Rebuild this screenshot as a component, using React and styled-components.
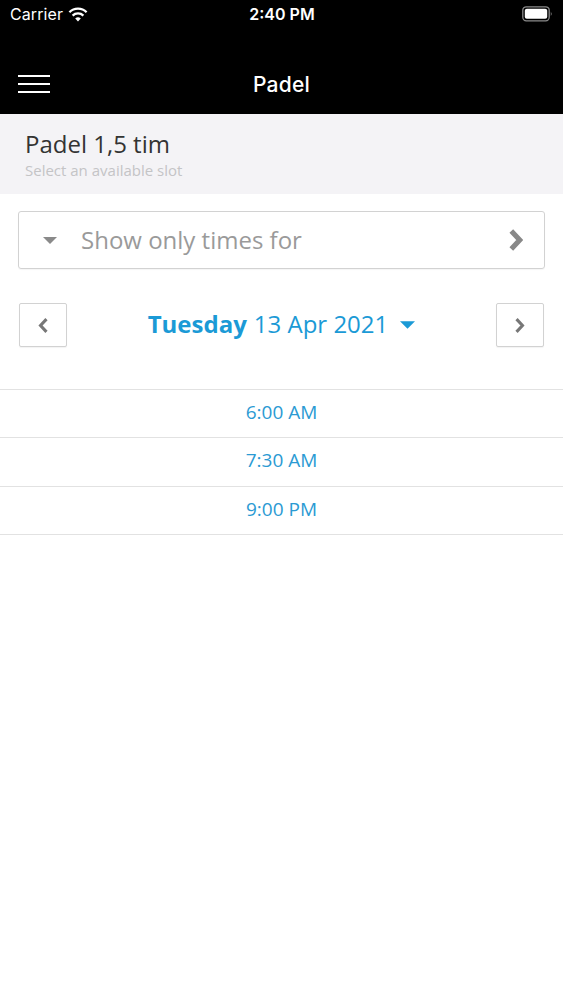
import React from "react";
import styled, { createGlobalStyle } from "styled-components";

const Global = createGlobalStyle`
  html, body { margin: 0; padding: 0; background: #fff; }
  body { font-family: "Open Sans", "Noto Sans", sans-serif; }
  * { box-sizing: border-box; }
`;

const Page = styled.div`
  width: 563px;
  min-height: 1000px;
  background: #fff;
`;

const Header = styled.header`
  background: #000;
  height: 114px;
  color: #fff;
  font-family: "Inter", "Liberation Sans", sans-serif;
`;

const StatusBar = styled.div`
  height: 28px;
  display: grid;
  grid-template-columns: 1fr auto 1fr;
  align-items: center;
  padding: 0 9px 0 10px;
  font-size: 16px;
`;

const StatusLeft = styled.div`
  display: flex;
  align-items: center;
  gap: 5px;
  letter-spacing: 0.1px;
`;

const StatusTime = styled.div`
  font-weight: 600;
`;

const StatusRight = styled.div`
  display: flex;
  justify-content: flex-end;
  align-items: center;
`;

const NavBar = styled.div`
  margin-top: 26px;
  height: 60px;
  display: grid;
  grid-template-columns: 1fr auto 1fr;
  align-items: center;
  padding: 0 18px;
`;

const NavTitle = styled.div`
  font-size: 21px;
  font-weight: 500;
  letter-spacing: 0.2px;
`;

const Hamburger = styled.div`
  width: 32px;
  display: flex;
  flex-direction: column;
  gap: 5.5px;
  span {
    display: block;
    height: 2.5px;
    background: #fff;
  }
`;

const SubHeader = styled.section`
  background: #f4f3f6;
  height: 80px;
  padding: 14px 25px 0;
`;

const SubTitle = styled.h1`
  margin: 0;
  font-size: 24px;
  line-height: 32px;
  font-weight: 400;
  color: #333;
`;

const SubCaption = styled.p`
  margin: 0;
  font-size: 15px;
  line-height: 20px;
  color: #c4c4c6;
`;

const Filter = styled.div`
  margin: 17px 18px 0;
  height: 58px;
  border: 1px solid #d2d2d2;
  border-radius: 3px;
  display: flex;
  align-items: center;
  padding: 0 21px 0 24px;
  box-shadow: 0 1px 1px rgba(0, 0, 0, 0.04);
`;

const FilterText = styled.span`
  flex: 1;
  margin-left: 24px;
  font-size: 24px;
  color: #9a9a9a;
  padding-bottom: 1px;
`;

const DateNav = styled.div`
  margin: 34px 19px 0;
  display: flex;
  align-items: center;
  justify-content: space-between;
`;

const NavButton = styled.button`
  width: 48px;
  height: 44px;
  border: 1px solid #d2d2d2;
  border-radius: 2px;
  background: #fff;
  padding: 0;
  display: flex;
  align-items: center;
  justify-content: center;
  box-shadow: 0 1px 1px rgba(0, 0, 0, 0.05);
`;

const DateLabel = styled.div`
  display: flex;
  align-items: center;
  font-size: 24px;
  color: #1b9ad6;
  padding-bottom: 3px;
  b {
    font-weight: 700;
    margin-right: 7px;
  }
`;

const DateCaret = styled.span`
  display: flex;
  margin: 3px 0 0 12px;
`;

const SlotList = styled.ul`
  list-style: none;
  margin: 42px 0 0;
  padding: 0;
  border-bottom: 1px solid #e2e2e2;
`;

const Slot = styled.li`
  height: 48.3px;
  border-top: 1px solid #e2e2e2;
  display: flex;
  align-items: center;
  justify-content: center;
  padding-bottom: 3px;
  font-size: 19px;
  color: #2b9ad3;
`;

const Wifi = () => (
  <svg width="20" height="15" viewBox="0 0 20 15">
    <path d="M10 14.5 L7.2 11.4 A4.2 4.2 0 0 1 12.8 11.4 Z" fill="#fff" />
    <path d="M4.6 8.6 A7.8 7.8 0 0 1 15.4 8.6" stroke="#fff" strokeWidth="2.3" fill="none" />
    <path d="M1.4 5.2 A12.3 12.3 0 0 1 18.6 5.2" stroke="#fff" strokeWidth="2.3" fill="none" />
  </svg>
);

const Battery = () => (
  <svg width="32" height="16" viewBox="0 0 32 16">
    <rect x="0.8" y="0.8" width="26.4" height="14" rx="3.5" stroke="#8a8a8a" strokeWidth="1.3" fill="none" />
    <rect x="2.8" y="2.8" width="22.4" height="10" rx="2" fill="#fff" />
    <path d="M28.8 5.5 Q30.6 7.8 28.8 10.1 Z" fill="#8a8a8a" />
  </svg>
);

const CaretDown = ({ color, w = 14, h = 7 }) => (
  <svg width={w} height={h} viewBox="0 0 14 7">
    <path d="M0 0 H14 L7 7 Z" fill={color} />
  </svg>
);

const Chevron = ({ dir = "right", w, h, sw, color }) => (
  <svg width={w} height={h} viewBox="0 0 12 20">
    <polyline
      points={dir === "right" ? "2.5,2.5 9.5,10 2.5,17.5" : "9.5,2.5 2.5,10 9.5,17.5"}
      fill="none"
      stroke={color}
      strokeWidth={sw}
      strokeLinejoin="miter"
    />
  </svg>
);

const slots = ["6:00 AM", "7:30 AM", "9:00 PM"];

export default function App() {
  return (
    <Page>
      <Global />
      <Header>
        <StatusBar>
          <StatusLeft>
            Carrier <Wifi />
          </StatusLeft>
          <StatusTime>2:40 PM</StatusTime>
          <StatusRight>
            <Battery />
          </StatusRight>
        </StatusBar>
        <NavBar>
          <Hamburger>
            <span />
            <span />
            <span />
          </Hamburger>
          <NavTitle>Padel</NavTitle>
          <div />
        </NavBar>
      </Header>
      <SubHeader>
        <SubTitle>Padel 1,5 tim</SubTitle>
        <SubCaption>Select an available slot</SubCaption>
      </SubHeader>
      <Filter>
        <CaretDown color="#8a8a8a" />
        <FilterText>Show only times for</FilterText>
        <Chevron w={15} h={24} sw={4.2} color="#888" />
      </Filter>
      <DateNav>
        <NavButton aria-label="Previous day">
          <Chevron dir="left" w={11} h={17} sw={3.6} color="#777" />
        </NavButton>
        <DateLabel>
          <b>Tuesday</b>13 Apr 2021
          <DateCaret>
            <CaretDown color="#1b9ad6" w={15} h={8} />
          </DateCaret>
        </DateLabel>
        <NavButton aria-label="Next day">
          <Chevron w={11} h={17} sw={3.6} color="#777" />
        </NavButton>
      </DateNav>
      <SlotList>
        {slots.map((s) => (
          <Slot key={s}>{s}</Slot>
        ))}
      </SlotList>
    </Page>
  );
}
